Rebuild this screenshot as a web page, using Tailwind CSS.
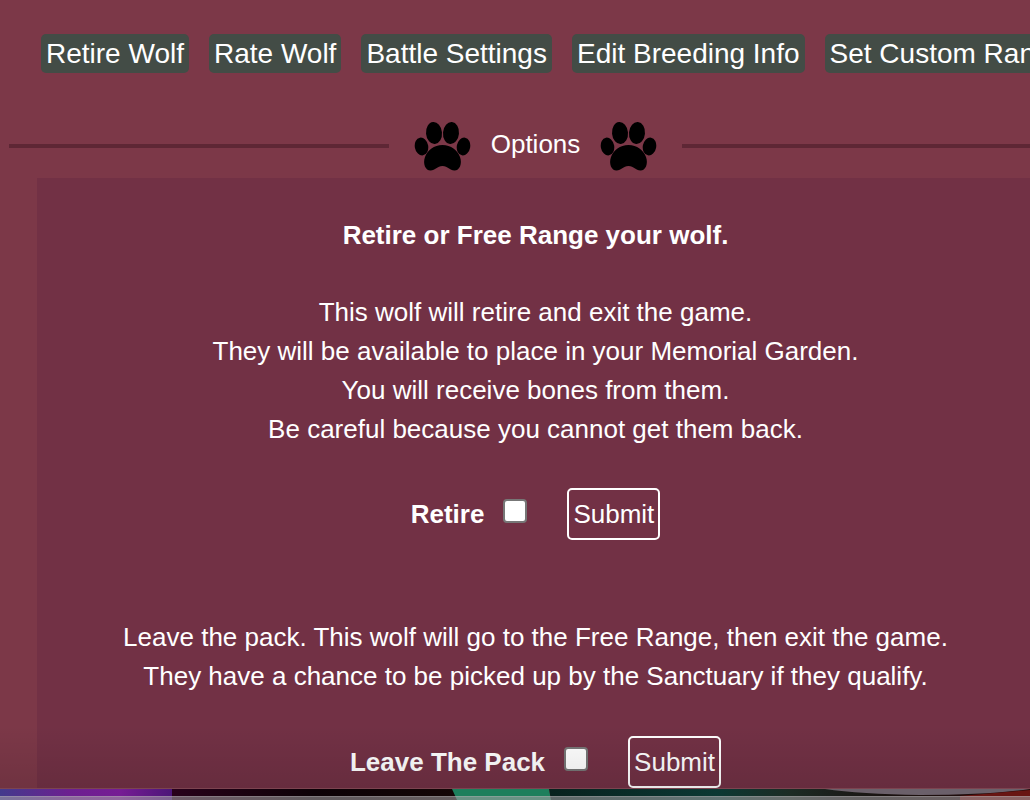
<!DOCTYPE html>
<html lang="en">
<head>
  <meta charset="UTF-8" />
  <meta name="viewport" content="width=device-width, initial-scale=1" />
  <title>Wolf Options</title>
  <script src="https://cdn.jsdelivr.net/npm/@tailwindcss/browser@4"></script>
</head>
<body class="flex h-screen flex-col overflow-hidden bg-[#7c3848] font-['Liberation_Sans',Arial,sans-serif] text-[26px] leading-[39px] text-white">
  <main class="relative min-h-0 flex-1 overflow-hidden pt-[34px]">
    <!-- Tabs -->
    <nav class="ml-[41px] flex gap-5 text-[28px] leading-[39px] whitespace-nowrap">
      <a href="#retire" class="rounded-[5px] bg-[#434c46] px-[5px]">Retire Wolf</a>
      <a href="#rate" class="rounded-[5px] bg-[#434c46] px-[5px]">Rate Wolf</a>
      <a href="#battle" class="rounded-[5px] bg-[#434c46] px-[5px]">Battle Settings</a>
      <a href="#breeding" class="rounded-[5px] bg-[#434c46] px-[5px]">Edit Breeding Info</a>
      <a href="#rank" class="rounded-[5px] bg-[#434c46] px-[5px]">Set Custom Rank</a>
    </nav>

    <!-- Section heading -->
    <div class="mt-[46px] -mr-8 ml-[9px] flex h-[54px] items-center">
      <div class="h-1 flex-1 bg-[#5e2735]"></div>
      <svg class="ml-[25px] h-[50px] w-[57px]" viewBox="0 0 57 50" fill="#000" aria-hidden="true">
        <ellipse cx="20" cy="12" rx="8" ry="11" transform="rotate(-5 20 12)" />
        <ellipse cx="37" cy="12" rx="8" ry="11" transform="rotate(5 37 12)" />
        <ellipse cx="7.500" cy="25.500" rx="6.700" ry="9" transform="rotate(-10 7.500 25.500)" />
        <ellipse cx="49.500" cy="25.500" rx="6.700" ry="9" transform="rotate(10 49.500 25.500)" />
        <path d="M28.500 24C37 24 43.500 29 46 36C48.500 43 45.500 49.500 40.500 49.500C35.500 49.500 34 45 28.500 45C23 45 21.500 49.500 16.500 49.500C11.500 49.500 8.500 43 11 36C13.500 29 20 24 28.500 24Z" />
      </svg>
      <h2 class="mx-5 pb-1">Options</h2>
      <svg class="mr-[25px] h-[50px] w-[57px]" viewBox="0 0 57 50" fill="#000" aria-hidden="true">
        <ellipse cx="20" cy="12" rx="8" ry="11" transform="rotate(-5 20 12)" />
        <ellipse cx="37" cy="12" rx="8" ry="11" transform="rotate(5 37 12)" />
        <ellipse cx="7.500" cy="25.500" rx="6.700" ry="9" transform="rotate(-10 7.500 25.500)" />
        <ellipse cx="49.500" cy="25.500" rx="6.700" ry="9" transform="rotate(10 49.500 25.500)" />
        <path d="M28.500 24C37 24 43.500 29 46 36C48.500 43 45.500 49.500 40.500 49.500C35.500 49.500 34 45 28.500 45C23 45 21.500 49.500 16.500 49.500C11.500 49.500 8.500 43 11 36C13.500 29 20 24 28.500 24Z" />
      </svg>
      <div class="h-1 flex-1 bg-[#5e2735]"></div>
    </div>

    <!-- Options panel -->
    <section class="mt-[5px] -mr-1 ml-[37px] bg-[#723145] pt-[38px] pb-10 text-center">
      <h3 class="font-bold">Retire or Free Range your wolf.</h3>
      <p class="mt-[38px]">
        This wolf will retire and exit the game.<br />
        They will be available to place in your Memorial Garden.<br />
        You will receive bones from them.<br />
        Be careful because you cannot get them back.
      </p>
      <form class="mt-[39px] flex items-baseline justify-center">
        <label for="retire" class="font-bold">Retire</label>
        <input type="checkbox" id="retire" class="ml-[19px] size-6 appearance-none rounded-[4px] border-2 border-[#777777] bg-white checked:bg-blue-500" />
        <button type="submit" class="ml-10 h-[52px] rounded-[5px] border-2 border-white px-1">Submit</button>
      </form>

      <p class="mt-[78px]">
        Leave the pack. This wolf will go to the Free Range, then exit the game.<br />
        They have a chance to be picked up by the Sanctuary if they qualify.
      </p>
      <form class="mt-10 flex items-baseline justify-center">
        <label for="leave" class="font-bold">Leave The Pack</label>
        <input type="checkbox" id="leave" class="ml-[19px] size-6 appearance-none rounded-[4px] border-2 border-[#777777] bg-white checked:bg-blue-500" />
        <button type="submit" class="ml-10 h-[52px] rounded-[5px] border-2 border-white px-1">Submit</button>
      </form>
    </section>

    <!-- Shade along the bottom edge -->
    <div class="pointer-events-none absolute inset-x-0 bottom-0 h-16 border-b border-[#7c4450] bg-linear-to-b from-transparent to-black/10"></div>
  </main>

  <!-- Coloured strip -->
  <footer class="shrink-0">
    <svg class="block h-[11px] w-full" viewBox="0 0 1030 11" preserveAspectRatio="none" aria-hidden="true">
      <defs>
        <linearGradient id="purple">
          <stop offset="0" stop-color="#433a8c" />
          <stop offset=".4" stop-color="#6c2090" />
          <stop offset=".7" stop-color="#761d94" />
          <stop offset="1" stop-color="#4c1678" />
        </linearGradient>
        <linearGradient id="dark">
          <stop offset="0" stop-color="#28001a" />
          <stop offset=".5" stop-color="#0c0006" />
          <stop offset="1" stop-color="#140606" />
        </linearGradient>
        <linearGradient id="teal">
          <stop offset="0" stop-color="#07211d" />
          <stop offset=".35" stop-color="#0b3833" />
          <stop offset=".5" stop-color="#1c2b24" />
          <stop offset=".7" stop-color="#1a1210" />
          <stop offset="1" stop-color="#240808" />
        </linearGradient>
      </defs>
      <rect width="172" height="11" fill="url(#purple)" />
      <rect x="172" width="285" height="11" fill="url(#dark)" />
      <path d="M452 0H549L551 11H457Z" fill="#1d7f5c" />
      <path d="M549 0H1030V11H551Z" fill="url(#teal)" />
      <path d="M825 0H1030Q990 6 920 6Q860 5 825 0Z" fill="#6b606a" />
      <path d="M960 7L1030 1V11H960Z" fill="#681512" />
      <rect y="7" width="1030" height="4" fill="#a8a4a8" fill-opacity=".55" />
      <rect y="7" width="1030" height="1" fill="#c8c4c8" fill-opacity=".3" />
    </svg>
  </footer>
</body>
</html>
